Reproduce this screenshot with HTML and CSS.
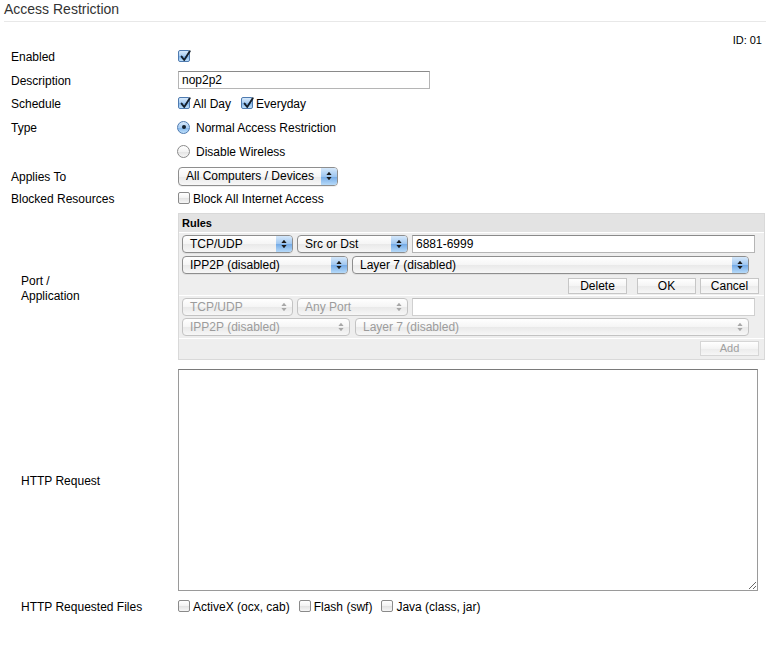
FILE: index.html
```html
<!DOCTYPE html>
<html>
<head>
<meta charset="utf-8">
<title>Access Restriction</title>
<link rel="stylesheet" href="styles.css">
</head>
<body>
<div class="page">
  <h1 class="title">Access Restriction</h1>
  <div class="id-line">ID: 01</div>
  <div class="form">
    <div class="row h-enabled">
      <div class="label">Enabled</div>
      <div class="value">
        <span class="cb on"><svg viewBox="0 0 12 12"><path d="M2.6 5.6 L5.2 9 L10.8 0.2" /></svg></span>
      </div>
    </div>
    <div class="row h-desc">
      <div class="label">Description</div>
      <div class="value"><input class="text desc" type="text" value="nop2p2"></div>
    </div>
    <div class="row h-sched">
      <div class="label">Schedule</div>
      <div class="value">
        <span class="opt"><span class="cb on"><svg viewBox="0 0 12 12"><path d="M2.6 5.6 L5.2 9 L10.8 0.2" /></svg></span><span class="t">All Day</span></span>
        <span class="opt"><span class="cb on"><svg viewBox="0 0 12 12"><path d="M2.6 5.6 L5.2 9 L10.8 0.2" /></svg></span><span class="t">Everyday</span></span>
      </div>
    </div>
    <div class="row type-row">
      <div class="label type-label">Type</div>
      <div class="value-col">
        <div class="radio-line"><span class="rd on"></span><span class="t">Normal Access Restriction</span></div>
        <div class="radio-line"><span class="rd"></span><span class="t">Disable Wireless</span></div>
      </div>
    </div>
    <div class="row h-applies">
      <div class="label">Applies To</div>
      <div class="value">
        <span class="sel w160 tall"><span class="sel-text">All Computers / Devices</span><span class="sel-arrows"><svg viewBox="0 0 6 10"><path d="M3 0.8 L5.6 4 H0.4 Z M0.4 6 H5.6 L3 9.2 Z"/></svg></span></span>
      </div>
    </div>
    <div class="row h-blocked">
      <div class="label">Blocked Resources</div>
      <div class="value"><span class="opt"><span class="cb"></span><span class="t">Block All Internet Access</span></span></div>
    </div>
    <div class="row rules-row">
      <div class="label sub">Port /<br>Application</div>
      <div class="rules">
        <div class="rules-head">Rules</div>
        <div class="rules-sec sec1">
          <div class="line">
            <span class="sel w111"><span class="sel-text">TCP/UDP</span><span class="sel-arrows"><svg viewBox="0 0 6 10"><path d="M3 0.8 L5.6 4 H0.4 Z M0.4 6 H5.6 L3 9.2 Z"/></svg></span></span>
            <span class="sel w111"><span class="sel-text">Src or Dst</span><span class="sel-arrows"><svg viewBox="0 0 6 10"><path d="M3 0.8 L5.6 4 H0.4 Z M0.4 6 H5.6 L3 9.2 Z"/></svg></span></span>
            <input class="text port" type="text" value="6881-6999">
          </div>
          <div class="line">
            <span class="sel w166"><span class="sel-text">IPP2P (disabled)</span><span class="sel-arrows"><svg viewBox="0 0 6 10"><path d="M3 0.8 L5.6 4 H0.4 Z M0.4 6 H5.6 L3 9.2 Z"/></svg></span></span>
            <span class="sel w397"><span class="sel-text">Layer 7 (disabled)</span><span class="sel-arrows"><svg viewBox="0 0 6 10"><path d="M3 0.8 L5.6 4 H0.4 Z M0.4 6 H5.6 L3 9.2 Z"/></svg></span></span>
          </div>
          <div class="btn-line">
            <button class="btn">Delete</button>
            <button class="btn ok">OK</button>
            <button class="btn">Cancel</button>
          </div>
        </div>
        <div class="rules-sec sec2">
          <div class="line">
            <span class="sel w111 dis"><span class="sel-text">TCP/UDP</span><span class="sel-arrows"><svg viewBox="0 0 6 10"><path d="M3 0.8 L5.6 4 H0.4 Z M0.4 6 H5.6 L3 9.2 Z"/></svg></span></span>
            <span class="sel w111 dis"><span class="sel-text">Any Port</span><span class="sel-arrows"><svg viewBox="0 0 6 10"><path d="M3 0.8 L5.6 4 H0.4 Z M0.4 6 H5.6 L3 9.2 Z"/></svg></span></span>
            <input class="text port dis-input" type="text" value="">
          </div>
          <div class="line">
            <span class="sel w168 dis"><span class="sel-text">IPP2P (disabled)</span><span class="sel-arrows"><svg viewBox="0 0 6 10"><path d="M3 0.8 L5.6 4 H0.4 Z M0.4 6 H5.6 L3 9.2 Z"/></svg></span></span>
            <span class="sel w394 dis"><span class="sel-text">Layer 7 (disabled)</span><span class="sel-arrows"><svg viewBox="0 0 6 10"><path d="M3 0.8 L5.6 4 H0.4 Z M0.4 6 H5.6 L3 9.2 Z"/></svg></span></span>
          </div>
        </div>
        <div class="rules-sec sec3">
          <button class="btn add" disabled>Add</button>
        </div>
      </div>
    </div>
    <div class="row ta-row">
      <div class="label sub">HTTP Request</div>
      <div class="value"><textarea class="ta"></textarea></div>
    </div>
    <div class="row h-files">
      <div class="label sub">HTTP Requested Files</div>
      <div class="value">
        <span class="opt"><span class="cb"></span><span class="t">ActiveX (ocx, cab)</span></span>
        <span class="opt"><span class="cb"></span><span class="t">Flash (swf)</span></span>
        <span class="opt"><span class="cb"></span><span class="t">Java (class, jar)</span></span>
      </div>
    </div>
  </div>
</div>
</body>
</html>
```

FILE: styles.css
```css
html, body {
  margin: 0;
  padding: 0;
  background: #fff;
}
body {
  font-family: "Liberation Sans", Arial, sans-serif;
  font-size: 12px;
  color: #000;
}
.page {
  width: 770px;
}
.title {
  margin: 0 4px;
  height: 21px;
  line-height: 18px;
  font-size: 14px;
  font-weight: normal;
  color: #333;
  border-bottom: 1px solid #e8e8e8;
}
.id-line {
  margin-top: 11px;
  height: 14px;
  line-height: 14px;
  font-size: 11px;
  text-align: right;
  padding-right: 8px;
}
.form {
  padding-left: 11px;
}
.row {
  display: flex;
  align-items: center;
}
.label {
  width: 167px;
  flex: none;
  box-sizing: border-box;
  line-height: 15px;
  padding-top: 2px;
}
.label.sub {
  padding-left: 10px;
}
.rules-row .label.sub {
  padding-top: 4px;
}
.value {
  display: flex;
  align-items: center;
}
.t {
  padding-top: 2px;
  line-height: 14px;
}
.h-enabled { height: 18px; }
.h-desc { height: 30px; }
.h-sched { height: 16px; }
.h-applies { height: 26px; }
.h-blocked { height: 18px; }
.h-files { height: 22px; }

.type-row {
  align-items: flex-start;
  padding-top: 4px;
}
.type-label { line-height: 24px; padding-top: 1px; }
.radio-line {
  height: 24px;
  display: flex;
  align-items: center;
}

.rules-row {
  padding: 6px 0 4px;
}
.ta-row {
  padding: 5px 0 4px;
}

/* checkbox */
.cb {
  display: inline-block;
  position: relative;
  width: 12px;
  height: 12px;
  box-sizing: border-box;
  border: 1px solid #8a8a8a;
  border-radius: 2px;
  background: linear-gradient(#ffffff, #f2f2f2 50%, #e2e2e2 51%, #f6f6f6);
  margin-right: 3px;
  flex: none;
}
.cb.on {
  border-color: #4f7bb0;
  background: linear-gradient(#d7e9fb, #a9cdf2 50%, #7fb3ea 51%, #bfe0fb);
}
.cb svg {
  position: absolute;
  left: 0;
  top: 0;
  width: 12px;
  height: 12px;
  overflow: visible;
}
.cb svg path {
  fill: none;
  stroke: #14202e;
  stroke-width: 1.9;
  stroke-linecap: round;
  stroke-linejoin: round;
}
.opt {
  display: inline-flex;
  align-items: center;
  margin-right: 10px;
}
.h-files .opt { margin-right: 9px; }

/* radio */
.rd {
  display: inline-block;
  position: relative;
  width: 13px;
  height: 13px;
  box-sizing: border-box;
  border: 1px solid #8a8a8a;
  border-radius: 50%;
  background: linear-gradient(#ffffff, #f2f2f2 50%, #e2e2e2 51%, #f6f6f6);
  margin-left: -1px;
  margin-right: 6px;
  flex: none;
}
.rd.on {
  border-color: #4f7bb0;
  background: linear-gradient(#d7e9fb, #a9cdf2 50%, #7fb3ea 51%, #bfe0fb);
}
.rd.on::after {
  content: "";
  position: absolute;
  left: 3.5px;
  top: 3.5px;
  width: 4px;
  height: 4px;
  border-radius: 50%;
  background: #14202e;
}

/* text inputs */
.text {
  box-sizing: border-box;
  height: 18px;
  margin: 0;
  padding: 0 3px;
  border: 1px solid #b5b5b5;
  border-top-color: #8a8a8a;
  background: #fff;
  font-family: "Liberation Sans", Arial, sans-serif;
  font-size: 12px;
  color: #000;
  outline: none;
}
.desc { width: 252px; }
.port { width: 343px; }
.dis-input { border-color: #d0d0d0; border-top-color: #bdbdbd; }

/* select popups */
.sel {
  display: inline-flex;
  align-items: stretch;
  box-sizing: border-box;
  height: 18px;
  border: 1px solid #8e8e8e;
  border-radius: 4px;
  background: linear-gradient(#ffffff, #f5f5f5 50%, #e9e9e9 51%, #f7f7f7);
  overflow: hidden;
  flex: none;
  box-shadow: 0 1px 0 rgba(0,0,0,0.06);
}
.sel.tall { height: 19px; }
.sel-text {
  flex: 1;
  padding-left: 7px;
  line-height: 16px;
  white-space: nowrap;
  overflow: hidden;
  color: #000;
}
.sel.tall .sel-text { line-height: 17px; }
.sel-arrows {
  width: 16px;
  flex: none;
  display: flex;
  align-items: center;
  justify-content: center;
  background: linear-gradient(#d5e8fb, #9ec6f0 50%, #74aae6 51%, #b6daf9);
}
.sel-arrows svg {
  width: 6px;
  height: 10px;
}
.sel-arrows path { fill: #1b1b1b; }
.sel.dis {
  border-color: #c3c3c3;
  box-shadow: none;
}
.sel.dis .sel-text { color: #9c9c9c; }
.sel.dis .sel-arrows { background: none; }
.sel.dis .sel-arrows path { fill: #a8a8a8; }
.w111 { width: 111px; }
.w160 { width: 160px; }
.w166 { width: 166px; }
.w168 { width: 168px; }
.w394 { width: 394px; }
.w397 { width: 397px; }

/* rules box */
.rules {
  width: 587px;
  box-sizing: border-box;
  border: 1px solid #d9d9d9;
  background: #fff;
  display: flex;
  flex-direction: column;
  gap: 1px;
}
.rules-head {
  height: 18px;
  line-height: 18px;
  background: #e3e3e3;
  font-weight: bold;
  font-size: 11px;
  padding-left: 3px;
}
.rules-sec {
  background: #eeeeee;
  padding-left: 3px;
  padding-right: 5px;
}
.sec1 { height: 62px; padding-top: 2px; box-sizing: border-box; }
.sec2 { height: 42px; padding-top: 2px; box-sizing: border-box; }
.sec3 { height: 20px; padding-top: 2px; box-sizing: border-box; display: flex; justify-content: flex-end; }
.line {
  display: flex;
  gap: 4px;
  height: 18px;
}
.sec1 .line + .line { margin-top: 3px; }
.sec2 .line + .line { margin-top: 2px; }
.sec2 .line + .line .w394 { margin-left: 1px; }
.btn-line {
  display: flex;
  justify-content: flex-end;
  gap: 4px;
  margin-top: 4px;
}
.btn {
  width: 59px;
  height: 16px;
  box-sizing: border-box;
  margin: 0;
  padding: 0;
  border: 1px solid #c6c6c6;
  border-radius: 0;
  background: linear-gradient(#ffffff, #f4f4f4 50%, #ebebeb 51%, #f6f6f6);
  font-family: "Liberation Sans", Arial, sans-serif;
  font-size: 12px;
  line-height: 14px;
  color: #000;
}
.btn.ok { margin-left: 6px; }
.btn.add {
  height: 15px;
  color: #a0a0a0;
  border-color: #d6d6d6;
  font-size: 11px;
  line-height: 13px;
}

/* textarea */
.ta {
  width: 580px;
  height: 222px;
  box-sizing: border-box;
  margin: 0;
  border: 1px solid #9a9a9a;
  border-top-color: #7a7a7a;
  background: #fff;
  outline: none;
  font-family: "Liberation Sans", Arial, sans-serif;
  font-size: 12px;
}
```
